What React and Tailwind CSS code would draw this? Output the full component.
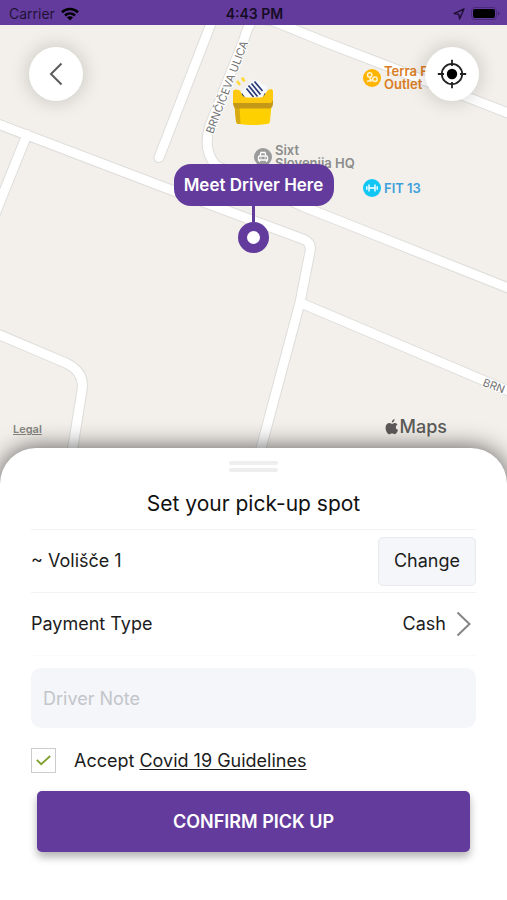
import { useState } from 'react';

const roads = [
  'M-6 123 L170 190 L304 240 Q312 244 310 252 L300 303 L250 490',
  'M27 135 L-6 217',
  'M213 19 L159 158',
  'M253 20 Q247 28 244 40 L210 126 Q202 150 216 166 L303 207 L346 224 L512 290',
  'M244 18 L272 21 L326 43 L386 66 L512 115',
  'M302 304 L512 393',
  'M-6 333 L67 364 Q85 373 82 391 L66 490',
];

function StatusBar() {
  return (
    <header className="grid h-[25px] shrink-0 grid-cols-3 items-center bg-[#633b9d] pr-[7px] pl-[9px] text-sm text-black">
      <div className="flex items-center gap-[6px] pt-[3px]">
        <span className="text-black/70">Carrier</span>
        <svg width="18" height="14" viewBox="0 0 18 14" fill="none" stroke="black" strokeWidth="2.6">
          <path d="M1 5.2C5.6 .9 12.4 .9 17 5.2" />
          <path d="M4 8.5C6.9 5.8 11.1 5.8 14 8.5" />
          <path d="M9 13.4L5.9 10.3C7.6 8.8 10.4 8.8 12.1 10.3Z" fill="black" stroke="none" />
        </svg>
      </div>
      <span className="pt-[3px] text-center font-semibold text-black/80">4:43 PM</span>
      <div className="flex items-center justify-end gap-[6px] pt-[2px]">
        <svg width="12" height="12" viewBox="0 0 12 12" fill="none" stroke="#1e0f33" strokeWidth="1.4" strokeLinejoin="round">
          <path d="M11 1L1 5.6L5.8 6.2L6.6 11Z" />
        </svg>
        <svg width="29" height="13" viewBox="0 0 29 13">
          <rect x=".5" y=".5" width="25" height="12" rx="3.5" fill="none" stroke="#4a2a7a" />
          <rect x="2" y="2" width="22" height="9" rx="2" fill="black" />
          <path d="M27 4.5V8.5Q28.6 8 28.6 6.5T27 4.5Z" fill="#452672" />
        </svg>
      </div>
    </header>
  );
}

function MapCanvas() {
  return (
    <svg
      className="absolute inset-0 h-full w-full"
      viewBox="0 25 507 460"
      preserveAspectRatio="xMidYMid slice"
      aria-hidden="true"
    >
      <rect y="25" width="507" height="460" fill="#f3f0eb" />
      <g fill="none" strokeLinecap="round" strokeLinejoin="round">
        {roads.map(d => (
          <path key={d} d={d} stroke="#dedddb" strokeWidth="11" />
        ))}
        {roads.map(d => (
          <path key={d} d={d} stroke="white" strokeWidth="9" />
        ))}
      </g>
      <g fill="#737373" fontSize="11" fontFamily="Inter, sans-serif" stroke="white" strokeWidth="2" paintOrder="stroke">
        <text transform="translate(213 135) rotate(-69)">BRNČIČEVA ULICA</text>
        <text transform="translate(482 386) rotate(21)">BRN</text>
      </g>
    </svg>
  );
}

function BoxIcon() {
  return (
    <svg className="absolute top-[36px] left-[231px]" width="44" height="66" viewBox="0 0 44 66">
      {/* sparks */}
      <path d="M6 20L9 24M11 16.5L13.5 20.5" stroke="#ffd83a" strokeWidth="2.6" />
      {/* opening, then the striped paper in it */}
      <path d="M10 33L14 30L31 30L35 33L33 38H12Z" fill="#294067" />
      <path d="M10.5 31L14 27L23 18.5L26 20L29 20.5L32 24L37 25L31 38H15Z" fill="#f8f9fd" />
      <path
        d="M15.5 27.5L22.5 36M17.5 24.5L26.5 35.5M20.5 22.5L29.5 33.5M23.5 20.5L31.5 30"
        stroke="#293c78"
        strokeWidth="1.7"
      />
      {/* lid */}
      <path
        d="M2 31Q2 28 5 28.5L9 29.5L11.5 34.5Q13 36.5 16 36.5H29Q32 36.5 33.5 34L37 29L40 28Q42 28 42 31V43H2Z"
        fill="#ffc90f"
      />
      <path d="M3.5 44H40.5L39 60.5Q38.6 63 36 63Q21 65 8 63Q5.4 63 5 60.5Z" fill="#ffd000" />
      <path d="M3.5 45H8.5L9.5 63H8Q5.4 63 5 60.5Z" fill="#d7a913" />
      <path d="M2 42H40L42 39V43Q41.5 47.5 38 47.5H6Q3 47.5 2 43Z" fill="#c59818" />
    </svg>
  );
}

function Poi({ className, icon, children }) {
  return (
    <div className={`absolute flex items-center gap-[3px] text-[13px] leading-[13px] font-semibold ${className}`}>
      {icon}
      <span className="whitespace-pre-line">{children}</span>
    </div>
  );
}

function MapLabels() {
  return (
    <>
      <BoxIcon />
      <Poi
        className="top-[40px] left-[363px] text-[#d97d24]"
        icon={
          <svg width="18" height="18" viewBox="0 0 18 18">
            <circle cx="9" cy="9" r="9" fill="#ffb400" />
            <g fill="none" stroke="#fff3d0" strokeWidth="1.5">
              <circle cx="6.7" cy="6" r="2.2" />
              <circle cx="12" cy="10.3" r="2.2" />
              <path d="M6.8 8.5L8.2 13M9.8 10.5L4 12.5" />
            </g>
          </svg>
        }
      >
        {'Terra F\nOutlet'}
      </Poi>
      <Poi
        className="top-[119px] left-[254px] text-[#8c8c8c]"
        icon={
          <svg width="18" height="18" viewBox="0 0 18 18">
            <circle cx="9" cy="9" r="9" fill="#9b9b9b" />
            <path
              d="M6 8L7 4.5H11L12 8M4.5 12H13.5V9Q13.5 8 12 8H6Q4.5 8 4.5 9ZM5.5 12V14M12.5 12V14M6.5 10H7.5M10.5 10H11.5"
              fill="none"
              stroke="white"
              strokeWidth="1.3"
            />
          </svg>
        }
      >
        {'Sixt\nSlovenija HQ'}
      </Poi>
      <Poi
        className="top-[154px] left-[363px] text-[#3da0dc]"
        icon={
          <svg width="18" height="18" viewBox="0 0 18 18">
            <circle cx="9" cy="9" r="9" fill="#12c6f5" />
            <path d="M6 5.5V12.5M12 5.5V12.5M3.8 7.2V10.8M14.2 7.2V10.8M6 9H12" stroke="white" strokeWidth="1.4" />
          </svg>
        }
      >
        FIT 13
      </Poi>
    </>
  );
}

function PickupPin() {
  return (
    <div className="absolute top-[139px] left-1/2 flex -translate-x-1/2 flex-col items-center">
      <div className="flex h-[42px] w-40 items-center justify-center rounded-[17px] bg-[#633b9d] text-[17px] font-semibold whitespace-nowrap text-white">
        Meet Driver Here
      </div>
      <div className="h-4 w-[3px] bg-[#633b9d]"></div>
      <div className="size-[31px] rounded-full border-9 border-[#633b9d] bg-white"></div>
    </div>
  );
}

function MapSection() {
  return (
    <section className="relative min-h-80 flex-1 overflow-hidden">
      <MapCanvas />
      <MapLabels />
      <PickupPin />

      <button
        type="button"
        aria-label="Back"
        className="absolute top-[22px] left-[29px] flex size-[54px] items-center justify-center rounded-full bg-white shadow-[0_0_20px_rgba(0,0,0,0.2)]"
      >
        <svg width="14" height="24" viewBox="0 0 14 24" fill="none" stroke="#5c5c5c" strokeWidth="2">
          <path d="M12.5 1.5L2 12L12.5 22.5" />
        </svg>
      </button>
      <button
        type="button"
        aria-label="My location"
        className="absolute top-[22px] right-[28px] flex size-[54px] items-center justify-center rounded-full bg-white shadow-[0_0_20px_rgba(0,0,0,0.2)]"
      >
        <svg width="30" height="30" viewBox="0 0 30 30" fill="none" stroke="#222" strokeWidth="1.8">
          <circle cx="15" cy="15" r="10.2" />
          <circle cx="15" cy="15" r="5.2" fill="black" stroke="none" />
          <path d="M15 .8V7M15 23V29.2M.8 15H7M23 15H29.2" />
        </svg>
      </button>

      <a href="#legal" className="absolute bottom-[47px] left-[13px] text-[11px] leading-4 font-semibold text-[#858580] underline">
        Legal
      </a>
      <div className="absolute right-[60px] bottom-[45px] flex items-center gap-px text-lg leading-6 font-medium text-[#5c5b59]">
        <svg width="14" height="16" viewBox="0 0 14 17" fill="currentColor">
          <path d="M9.8 0C9.9 1.9 8.5 3.8 6.8 3.8C6.6 2 8.2 .2 9.8 0ZM12.8 5.8C10.2 7.5 10.7 10.7 13.4 11.7C12.7 13.8 11.3 16.1 9.9 16.2C8.8 16.2 8.4 15.5 7.1 15.5C5.8 15.5 5.3 16.2 4.3 16.2C2.3 16.2 .2 12.5 .2 9.2C.2 6 2.2 4.3 4.2 4.3C5.4 4.3 6.2 5.1 7.1 5.1C8 5.1 9 4.2 10.4 4.3C11.4 4.4 12.3 4.9 12.8 5.8Z" />
        </svg>
        Maps
      </div>
    </section>
  );
}

function PickupSheet() {
  const [note, setNote] = useState('');
  const [accepted, setAccepted] = useState(true);

  const handleSubmit = (e) => {
    e.preventDefault();
  };

  return (
    <form
      onSubmit={handleSubmit}
      className="relative -mt-9 rounded-t-[36px] bg-white px-[31px] pb-12 shadow-[0_0_24px_rgba(0,0,0,0.65)]"
    >
      {/* Drag handle */}
      <div className="flex flex-col items-center gap-[3px] pt-[13px]">
        <div className="h-1 w-[49px] rounded-full bg-[#eeeeee]"></div>
        <div className="h-1 w-[49px] rounded-full bg-[#eeeeee]"></div>
      </div>

      <h1 className="pt-4 pb-[9px] text-center text-[21px] leading-8 text-[#111]">Set your pick-up spot</h1>

      <div className="flex h-16 items-center justify-between border-y border-[#f3f3f3]">
        <span>~ Volišče 1</span>
        <button type="button" className="h-[49px] rounded-[5px] border border-[#e8eaed] bg-[#f4f6fa] px-[15px]">
          Change
        </button>
      </div>

      <button type="button" className="flex h-[63px] w-full items-center justify-between border-b border-[#fafafa] pr-[5px]">
        <span>Payment Type</span>
        <span className="flex items-center gap-[10px]">
          Cash
          <svg width="15" height="26" viewBox="0 0 15 26" fill="none" stroke="#858585" strokeWidth="2">
            <path d="M1.5 1.5L13.5 13L1.5 24.5" />
          </svg>
        </span>
      </button>

      <input
        type="text"
        aria-label="Driver Note"
        placeholder="Driver Note"
        value={note}
        onChange={e => setNote(e.target.value)}
        className="mt-3 block h-[60px] w-full rounded-[10px] bg-[#f4f6fa] px-3 outline-none placeholder:text-[#c3c5ca]"
      />

      <div className="mt-5 flex items-center gap-[18px]">
        <div className="grid size-[25px] place-items-center">
          <input
            id="guidelines"
            type="checkbox"
            checked={accepted}
            onChange={e => setAccepted(e.target.checked)}
            className="peer col-start-1 row-start-1 size-[25px] appearance-none border border-[#cccccc] bg-white"
          />
          <svg
            className="pointer-events-none invisible col-start-1 row-start-1 peer-checked:visible"
            width="15"
            height="11"
            viewBox="0 0 15 11"
            fill="none"
            stroke="#7fa02c"
            strokeWidth="1.8"
          >
            <path d="M.8 4.8L5.2 9.2L14.2 1" />
          </svg>
        </div>
        <label htmlFor="guidelines">
          Accept <a href="#guidelines" className="underline underline-offset-2">Covid 19 Guidelines</a>
        </label>
      </div>

      <div className="px-[6px] pt-[18px]">
        <button
          type="submit"
          className="h-[61px] w-full rounded-[5px] bg-[#633b9d] font-semibold text-white shadow-[0_5px_8px_rgba(0,0,0,0.3)]"
        >
          CONFIRM PICK UP
        </button>
      </div>
    </form>
  );
}

export default function App() {
  return (
    <main className="flex min-h-screen flex-col bg-white font-['Inter',sans-serif] text-[18px] leading-6 text-[#1c1c1c]">
      <StatusBar />
      <MapSection />
      <PickupSheet />
    </main>
  );
}
